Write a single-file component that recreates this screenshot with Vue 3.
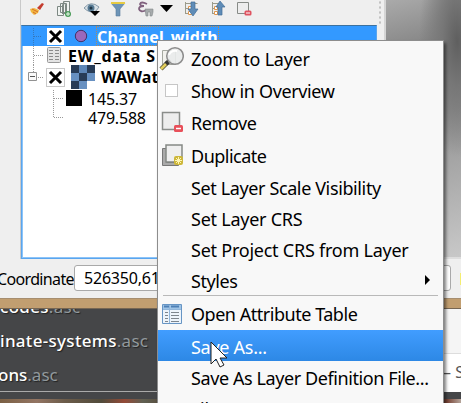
<script setup>
const menu = [
  { label: 'Zoom to Layer', icon: 'zoom', h: 33, track: -0.25 },
  { label: 'Show in Overview', icon: 'check', h: 32, track: -0.36 },
  { label: 'Remove', icon: 'remove', h: 32, track: -0.4 },
  { label: 'Duplicate', icon: 'duplicate', h: 33, track: -0.5 },
  { label: 'Set Layer Scale Visibility', h: 31, track: -0.38 },
  { label: 'Set Layer CRS', h: 31, track: -0.25 },
  { label: 'Set Project CRS from Layer', h: 31, track: -0.24 },
  { label: 'Styles', h: 31, sub: true, track: -0.4 },
  { label: 'Open Attribute Table', icon: 'table', h: 35, line: true, track: -0.47 },
  { label: 'Save As...', h: 31, active: true, track: -0.27 },
  { label: 'Save As Layer Definition File...', h: 31, track: -0.41 },
  { label: 'File', h: 31, track: -0.3 },
]
</script>

<template>
  <div class="screen">
    <div class="workspace">
      <aside class="gutter"></aside>
      <section class="dock">
        <svg class="toolbar" width="363" height="25" viewBox="0 0 363 25">
          <g transform="translate(-21 0)">
            <path d="M37 8l5-5 2 1-4 6z" fill="#c43c2e" />
            <path d="M30 9l4-1 5 2-1 3-4 2-3-3z" fill="#f0b840" />
            <path d="M32 9l6 3M33 12l3 2" stroke="#d96a28" />
            <g fill="#f0f3f1" stroke="#7d8883" stroke-width="1">
              <path d="M57.500 6.500h6v9h-6zM60.500 3.500h6v9h-6zM63.500 1.500h6v12h-6z" />
              <path d="M62.500 14V5q2-4 3 0v8" fill="none" />
            </g>
            <circle cx="68" cy="14" r="3" fill="#4a9c59" /><path d="M66 14h4M68 12v4" stroke="#e8f5e8" />
            <path d="M84 8q7-8 15-1l-3 4q-6 3-12-3z" fill="#d9e1e7" stroke="#8499a8" />
            <circle cx="91" cy="8" r="3.500" fill="#557993" /><circle cx="91" cy="8" r="1.500" fill="#203647" />
            <path d="M90 11h10l-5 5z" fill="#000" />
            <path d="M111 3h14l-5 6v7h-4V9z" fill="#6d94b7" stroke="#587b9c" stroke-width=".6" />
            <path d="M111 2h14v2h-14z" fill="#e7cb43" />
            <path d="M147 4q-6-3-7 0 0 2 4 2-5 0-5 3 1 4 8 1" fill="none" stroke="#80617e" stroke-width="1.800" />
            <path d="M145 9h8v3l-1 4h-2v-4h-2v4h-2z" fill="#a6aaac" stroke="#85898b" stroke-width=".6" />
            <path d="M160 5h13l-6.500 7z" fill="#000" />
            <path d="M185.500 2v12M185.500 3.500h12M186 8.500h4M186 13.500h4" fill="none" stroke="#9b9b8b" />
            <path d="M188.500 6.500h3v3h-3zM188.500 11.500h3v3h-3z" fill="#fff" stroke="#e0964d" />
            <path d="M191 2h4v7h3l-5 7-5-7h3z" fill="#5f8cb7" stroke="#426e98" stroke-width=".7" />
            <path d="M212.500 2v12M212.500 3.500h8M213 8.500h4M213 13.500h4" fill="none" stroke="#9b9b8b" />
            <path d="M214.500 6.500h3v3h-3zM214.500 11.500h3v3h-3z" fill="#fff" stroke="#e0964d" />
            <path d="M218 15V7h-2l4-6 5 6h-3v8z" fill="#5f8cb7" stroke="#426e98" stroke-width=".7" />
            <path d="M237.500 2.500h11v11h-11z" fill="#ededed" stroke="#878b87" />
            <rect x="244.500" y="10.500" width="7" height="5" rx="1.500" fill="#df5360" /><path d="M246 13h4" stroke="#fff" />
          </g>
        </svg>
        <div class="tree">
          <div class="row selected">
            <svg width="74" height="20" viewBox="22 26 74 20">
              <path d="M33.500 28v18M34 36.500h8" stroke="#3577bb" stroke-dasharray="1 1" />
              <rect x="47" y="28" width="17" height="17" fill="#fff" />
              <path d="M50 31l11 11M61 31L50 42" stroke="#000" stroke-width="3" />
              <circle cx="81" cy="36" r="5.700" fill="#9b68bb" stroke="#453166" />
            </svg>
            <span class="name focus">Channel_width</span>
          </div>
          <div class="row data">
            <svg width="46" height="19" viewBox="22 46 46 19">
              <path d="M33.500 46v19M34 55.500h9" stroke="#999" stroke-dasharray="1 1" />
              <rect x="47.500" y="47.500" width="13" height="15" rx="1" fill="#e4e4e4" stroke="#999" />
              <path d="M49 50.500h4M55 50.500h4M49 53.500h4M55 53.500h4M49 56.500h4M55 56.500h4M49 59.500h4M55 59.500h4" stroke="#8b8b8b" />
            </svg>
            <span class="name">EW_data S</span>
          </div>
          <div class="row raster">
            <svg width="79" height="24" viewBox="22 65 79 24">
              <path d="M33.500 65v8M38 77.500h5" stroke="#999" stroke-dasharray="1 1" />
              <path d="M28.500 72.500h8v8h-8z" fill="#fafafa" stroke="#929292" /><path d="M30 76.500h5" stroke="#555" />
              <rect x="46.500" y="68.500" width="18" height="18" fill="#fff" stroke="#c8c8c8" />
              <path d="M50 72l11 11M61 72L50 83" stroke="#000" stroke-width="3" />
              <path d="M71 65h24v16h-8v8H71z" fill="#6790c1" />
              <path d="M71 65h8v8h-8zM87 65h8v8h-8zM79 73h8v8h-8zM71 81h8v8h-8z" fill="#283c57" />
              <path d="M79 65h8v8h-8z" fill="#5d86b7" />
            </svg>
            <span class="name">WAWater</span>
          </div>
          <div class="row leaf">
            <svg width="66" height="19" viewBox="22 89 66 19">
              <path d="M53.500 90v18M54 98.500h9" stroke="#999" stroke-dasharray="1 1" />
              <path d="M66 90h16v16H66z" />
            </svg>
            <span>145.37</span>
          </div>
          <div class="row leaf">
            <svg width="66" height="19" viewBox="22 108 66 19">
              <path d="M53.500 108v9.500h10" fill="none" stroke="#999" stroke-dasharray="1 1" />
            </svg>
            <span>479.588</span>
          </div>
        </div>
      </section>
      <section class="map"></section>
    </div>

    <div class="status">
      <span class="coord">Coordinate</span>
      <div class="field">526350,61</div>
      <i class="swatch"></i>
    </div>
    <div class="desk"></div>
    <div class="bottom">
      <div class="files">
        <div class="file f1">codes<em>.asc</em></div>
        <div class="file f2">inate-systems<em>.asc</em></div>
        <div class="file f3">ons<em>.asc</em></div>
      </div>
      <div class="page">
        <div class="pale"></div>
        <div class="caption">– S</div>
        <div class="dark"></div>
      </div>
    </div>
    <div class="photo"></div>

    <nav class="menu">
      <div v-for="m in menu" :key="m.label" class="item" :class="{ active: m.active, line: m.line }" :style="{ height: m.h + 'px', letterSpacing: m.track + 'px' }">
        <span class="icon">
          <svg v-if="m.icon === 'zoom'" width="26" height="28" viewBox="0 0 26 28">
            <path d="M4.500 6.500h13v14h-13z" fill="#f1f1ed" stroke="#a5a8a0" />
            <path d="M10 18l-7 7" stroke="#605c43" stroke-width="4.500" /><path d="M10 18l-7 7" stroke="#e4cf5b" stroke-width="2.500" />
            <path d="M12 16l-4 4" stroke="#333" stroke-width="4" />
            <circle cx="17" cy="12" r="8.300" fill="#e9ebeb" fill-opacity=".9" stroke="#8d8d8d" stroke-width="1.500" />
            <path d="M11 11q2-5 8-4" fill="none" stroke="#fff" stroke-width="2" />
          </svg>
          <i v-else-if="m.icon === 'check'" class="box"></i>
          <svg v-else-if="m.icon === 'remove'" width="26" height="26" viewBox="0 0 26 26">
            <path d="M4.500 3.500h17v17h-17z" fill="#ededed" stroke="#8a8d8a" stroke-width="1.500" />
            <rect x="16" y="16" width="9" height="7" rx="1.500" fill="#e8505a" /><path d="M18 19.500h5" stroke="#fff" stroke-width="1.500" />
          </svg>
          <svg v-else-if="m.icon === 'duplicate'" width="26" height="26" viewBox="0 0 26 26">
            <path d="M4.500 6.500h4v14h12v3h-16z" fill="#aaa" stroke="#777" />
            <path d="M8 3h16v17H8z" fill="#efefef" stroke="#858985" stroke-width="1.500" />
            <rect x="16" y="14" width="9" height="9" rx="2" fill="#cdb73b" /><path d="M20.500 15v7M17 18.500h7M18 16l5 5M23 16l-5 5" stroke="#fff6b5" />
          </svg>
          <svg v-else-if="m.icon === 'table'" width="26" height="26" viewBox="0 0 26 26">
            <path d="M4.500 4.500h19v19h-19z" fill="#edf4fb" stroke="#6795c4" />
            <path d="M5 5h18v4H5z" fill="#9fc4e6" /><path d="M6 6.500h5M13 6.500h8" stroke="#4e80b5" stroke-width="2" />
            <path d="M5 9.500h18M11.500 5v18" stroke="#91b6da" /><path d="M7 12.500h3M13 12.500h8M7 15.500h3M13 15.500h8M7 18.500h3M13 18.500h8M7 21.500h3M13 21.500h8" stroke="#7d858d" />
          </svg>
        </span>
        <span class="label">{{ m.label }}</span>
        <svg v-if="m.sub" class="arrow" width="5" height="10" viewBox="0 0 5 10"><path d="M0 0l5 5-5 5z" /></svg>
      </div>
    </nav>
    <svg class="cursor" width="20" height="29" viewBox="0 0 20 29">
      <path d="M1 1v22l5-5 4 8 4-2-4-7h7z" fill="#fff" stroke="#222" />
    </svg>
  </div>
</template>

<style>
body { margin: 0; overflow: hidden; }
</style>
<style scoped>
.screen { position: relative; width: 461px; height: 403px; overflow: hidden; display: flex; flex-direction: column; background: #efefef; color: #000; font-family: "Noto Sans", sans-serif; white-space: nowrap; }
.screen * { box-sizing: border-box; }
.workspace { display: flex; height: 259px; flex: none; }
.gutter { width: 21px; border-right: 1px solid #c9c9c9; flex: none; }
.dock { width: 363px; flex: none; background: #efefef; }
.toolbar { display: block; background: radial-gradient(circle, #c2c2c2 1px, transparent 1.300px) 356px 0 / 6px 5px repeat-y; }
.tree { width: 356px; height: 234px; background: #fff; border: 1px solid #5aa5ee; border-top-color: #3c719f; box-shadow: inset 1px -1px #8cc4f8; }
.row { display: flex; align-items: center; }
.row svg { flex: none; }
.selected { height: 20px; color: #fff; background: #3399ff; }
.data { height: 19px; }
.raster { height: 24px; }
.leaf { height: 19px; font-size: 16px; letter-spacing: -.2px; }
.name { font: bold 16px/20px "Noto Sans", sans-serif; }
.data .name { letter-spacing: .85px; }
.raster .name { letter-spacing: .1px; }
.focus { border: 1px dotted #b78a55; height: 20px; line-height: 20px; letter-spacing: .22px; }
.map { flex: 1; border-left: 2px solid #d5d5d5; border-bottom: 2px solid #ddd; background: radial-gradient(ellipse at 95% 16%, #5f5f5f 0, #777 15%, transparent 38%), linear-gradient(165deg, #aaa 0, #858585 20%, #929292 45%, #c8c8c8 100%); }
.status { height: 39px; flex: none; display: flex; align-items: center; background: #efefef; }
.coord { width: 74px; font-size: 16px; letter-spacing: -.65px; text-indent: -3px; padding-top: 1px; flex: none; }
.field { width: 377px; height: 26px; margin-top: -1px; padding-left: 9px; line-height: 25px; font-size: 16px; letter-spacing: -.2px; background: #fff; border: 1px solid #a9a9a9; border-radius: 3px; }
.swatch { width: 1px; height: 12px; margin-left: auto; background: #f4ed70; }
.desk { height: 11px; flex: none; background: #c19e70; border-top: 1px solid #a68e70; border-bottom: 1px solid #766653; }
.bottom { height: 90px; flex: none; display: flex; }
.files { width: 443px; height: 90px; overflow: hidden; background: linear-gradient(#454648 82px, #aaa 82px, #aaa 83px, #454648 83px); color: #fff; font-size: 17px; font-weight: 500; letter-spacing: .3px; text-shadow: 1px 1px 1px #222; }
.file { height: 34px; line-height: 34px; }
.file em { font-style: normal; font-weight: 400; color: #92999d; }
.f1 { margin-top: -19px; }
.f3 { letter-spacing: 0; margin-left: -2px; }
.page { width: 18px; display: flex; flex-direction: column; }
.pale { height: 45px; background: #f5f5f5; border-bottom: 1px solid #ddd; }
.caption { height: 38px; line-height: 37px; background: #fff; font-size: 16px; color: #555; }
.dark { flex: 1; background: #454648; }
.photo { flex: 1; background: linear-gradient(90deg, #7b6044, #937563 8%, #6c5c4a 14%, #514b3b 22%, #934a37 27%, #606052 31%, #554839 36%, #774335 97%, #b6a69c); }
.menu { position: absolute; left: 157px; top: 40px; width: 287px; height: 370px; background: #f8f8f8; border: 1px solid #8d8d8d; box-shadow: 2px 3px 3px rgba(0, 0, 0, .5); }
.item { display: flex; align-items: center; font-size: 18px; }
.icon { width: 33px; height: 28px; display: flex; align-items: center; flex: none; }
.icon .box { width: 13px; height: 13px; margin-left: 7px; background: #fff; border: 1px solid #c6c6c6; }
.label { line-height: 28px; padding-top: 2px; }
.active { color: #fff; background: linear-gradient(#419dff, #2d88e5); }
.line { background: linear-gradient(#b9b9b9, #b9b9b9) 5px 0 / 275px 1px no-repeat; }
.line .label { padding-top: 3px; }
.arrow { margin-left: auto; margin-right: 13px; }
.cursor { position: absolute; left: 210px; top: 341px; }
</style>
